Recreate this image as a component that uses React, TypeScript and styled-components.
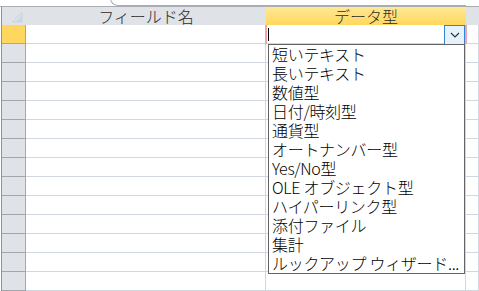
import React from "react";
import styled, { createGlobalStyle } from "styled-components";

const Global = createGlobalStyle`
  html, body { margin: 0; padding: 0; background: #ffffff; }
  body { font-family: "Noto Sans CJK JP", "Noto Sans", sans-serif; overflow: hidden; }
`;

const Page = styled.div`
  width: 479px;
  height: 291px;
  overflow: hidden;
  background: #fff;
`;

const TopStrip = styled.div`
  position: relative;
  height: 6px;
  border-bottom: 1px solid #a9adb2;
  background: #fff;
`;

const TabEdge = styled.div`
  position: absolute;
  left: 110px;
  top: -8px;
  width: 356px;
  height: 14px;
  border-left: 1px solid #a9adb2;
  border-bottom: 1px solid #a9adb2;
  border-bottom-left-radius: 8px;
  box-sizing: border-box;
`;

const Table = styled.div`
  margin-left: 1px;
  border-left: 1px solid #8e9196;
  display: flex;
  flex-direction: column;
`;

const HeaderRow = styled.div`
  display: flex;
  height: 18px;
  background: #dfe2e7;
`;

const Corner = styled.div`
  position: relative;
  width: 24px;
  flex: none;
`;

const CornerIcon = styled.svg`
  position: absolute;
  left: 9px;
  top: 4px;
`;

const HeaderCell = styled.div<{ $w?: number; $active?: boolean }>`
  ${(p) => (p.$w ? `width: ${p.$w}px; flex: none;` : "flex: 1;")}
  height: 18px;
  display: flex;
  align-items: center;
  justify-content: center;
  font-size: 16px;
  font-weight: 300;
  line-height: 18px;
  color: #2b2b2b;
  white-space: nowrap;
  background: ${(p) =>
    p.$active ? "linear-gradient(#ffe895, #ffd75c)" : "#dfe2e7"};
`;

const Row = styled.div`
  display: flex;
  height: 19px;
`;

const Selector = styled.div<{ $active?: boolean }>`
  width: 23px;
  flex: none;
  background: ${(p) => (p.$active ? "#ffd75e" : "#dfe2e7")};
  border-right: 1px solid #a3a6aa;
  border-bottom: 1px solid #a3a6aa;
`;

const Cell = styled.div<{ $w?: number }>`
  position: relative;
  ${(p) => (p.$w ? `width: ${p.$w - 1}px; flex: none;` : "flex: 1;")}
  border-right: 1px solid #d0d7e1;
  border-bottom: 1px solid #d0d7e1;
  background: #fff;
`;

const ActiveFrame = styled.div`
  position: absolute;
  left: -1px;
  right: -2px;
  top: 0;
  bottom: -1px;
  border-left: 2px solid #f4a4a8;
  border-right: 2px solid #f4a4a8;
  z-index: 2;
`;

const Caret = styled.div`
  position: absolute;
  left: 2px;
  top: 3px;
  width: 1px;
  height: 13px;
  background: #000;
`;

const DropButton = styled.div`
  position: absolute;
  right: 0px;
  top: 0;
  width: 21px;
  height: 20px;
  box-sizing: border-box;
  border: 1px solid #2f84d6;
  background: #e5f1fb;
  display: flex;
  align-items: center;
  justify-content: center;
`;

const List = styled.div`
  position: absolute;
  left: 2px;
  top: 19px;
  width: 197px;
  height: 230px;
  box-sizing: border-box;
  border: 1px solid #646464;
  background: #fff;
  z-index: 3;
  display: flex;
  flex-direction: column;
`;

const Item = styled.div`
  height: 19px;
  line-height: 19px;
  padding-left: 3px;
  font-size: 16px;
  font-weight: 300;
  color: #000;
  white-space: nowrap;
  letter-spacing: -0.3px;
`;

const types = [
  "短いテキスト",
  "長いテキスト",
  "数値型",
  "日付/時刻型",
  "通貨型",
  "オートナンバー型",
  "Yes/No型",
  "OLE オブジェクト型",
  "ハイパーリンク型",
  "添付ファイル",
  "集計",
  "ルックアップ ウィザード...",
];

export default function App() {
  const rows = Array.from({ length: 14 }, (_, i) => i);
  return (
    <Page>
      <Global />
      <TopStrip>
        <TabEdge />
      </TopStrip>
      <Table>
        <HeaderRow>
          <Corner>
            <CornerIcon width="12" height="12" viewBox="0 0 12 12">
              <defs>
                <linearGradient id="tri" x1="0" y1="0" x2="1" y2="1">
                  <stop offset="0" stopColor="#f4f6f9" />
                  <stop offset="1" stopColor="#c3cedb" />
                </linearGradient>
              </defs>
              <polygon points="11,1 11,11 1,11" fill="url(#tri)" stroke="#c9d2dd" strokeWidth="0.8" />
            </CornerIcon>
          </Corner>
          <HeaderCell $w={240}>フィールド名</HeaderCell>
          <HeaderCell $w={200} $active>データ型</HeaderCell>
          <HeaderCell />
        </HeaderRow>
        {rows.map((i) => (
          <Row key={i}>
            <Selector $active={i === 0} />
            <Cell $w={240} />
            <Cell $w={200}>
              {i === 0 && (
                <>
                  <ActiveFrame />
                  <Caret />
                  <DropButton>
                    <svg width="10" height="6" viewBox="0 0 10 6">
                      <polyline points="1,1 5,5 9,1" fill="none" stroke="#333" strokeWidth="1.2" />
                    </svg>
                  </DropButton>
                  <List>
                    {types.map((t) => (
                      <Item key={t}>{t}</Item>
                    ))}
                  </List>
                </>
              )}
            </Cell>
            <Cell />
          </Row>
        ))}
      </Table>
    </Page>
  );
}
